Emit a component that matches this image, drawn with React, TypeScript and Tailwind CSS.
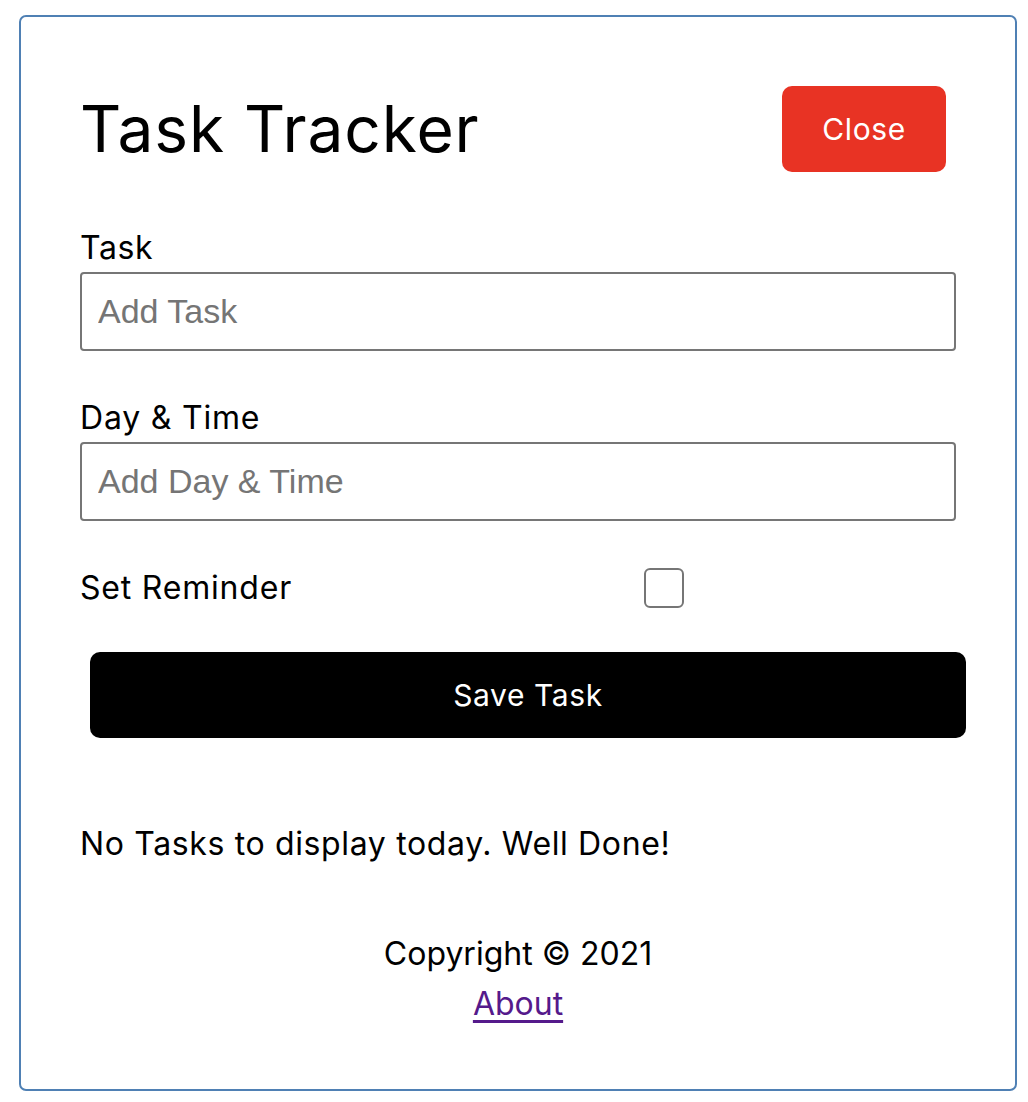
export default function App() {
  return (
    <div className="min-h-[1102px] bg-white pt-[15px] text-black" style={{ fontFamily: "Inter, 'Noto Sans', sans-serif" }}>
      <div className="ml-[19px] w-[998px] rounded-[7px] border-2 border-[#4f80b4] px-[59px] pt-[59px] pb-[60px]">
        <header className="flex h-[106px] items-center justify-between">
          <h1 className="text-[64px] leading-none font-normal tracking-[0.014em]">Task Tracker</h1>
          <button className="m-[10px] h-[86px] w-[164px] rounded-[10px] bg-[#e83324] text-[30px] tracking-[0.02em] text-white">
            Close
          </button>
        </header>

        <form className="mt-[40px]">
          <div>
            <label className="block pt-[2px] text-[32px] leading-[48px] tracking-[0.02em]">Task</label>
            <input
              type="text"
              placeholder="Add Task"
              className="block h-[79px] w-full rounded-[4px] border-2 border-[#767676] px-[16px] text-[34px] placeholder:text-[#757575]"
              style={{ fontFamily: "'Liberation Sans', Arial, sans-serif" }}
            />
          </div>

          <div className="mt-[41px]">
            <label className="block pt-[2px] text-[32px] leading-[48px] tracking-[0.025em]">Day &amp; Time</label>
            <input
              type="text"
              placeholder="Add Day & Time"
              className="block h-[79px] w-full rounded-[4px] border-2 border-[#767676] px-[16px] text-[34px] placeholder:text-[#757575]"
              style={{ fontFamily: "'Liberation Sans', Arial, sans-serif" }}
            />
          </div>

          <div className="mt-[43px] flex h-[48px] items-center">
            <label className="flex-1 text-[32px] leading-[48px] tracking-[0.025em]">Set Reminder</label>
            <div className="flex flex-[2] justify-center">
              <input
                type="checkbox"
                className="h-[40px] w-[40px] appearance-none rounded-[6px] border-2 border-[#767676] bg-white"
              />
            </div>
          </div>

          <button
            type="submit"
            className="mt-[40px] ml-[10px] block h-[86px] w-[876px] rounded-[10px] bg-black text-[30px] tracking-[0.02em] text-white"
          >
            Save Task
          </button>
        </form>

        <p className="mt-[82px] text-[32px] leading-[48px] tracking-[0.02em]">No Tasks to display today. Well Done!</p>

        <footer className="mt-[61px] text-center text-[32px]">
          <p className="leading-[50px]">Copyright © 2021</p>
          <a href="#" className="leading-[50px] text-[#551a8b] underline underline-offset-[5px]">
            About
          </a>
        </footer>
      </div>
    </div>
  );
}
